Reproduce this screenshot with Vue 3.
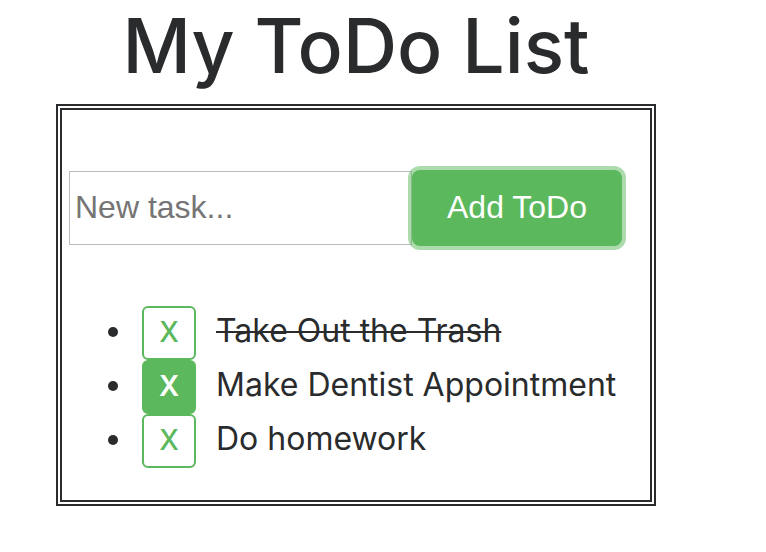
<script setup>
import { ref } from 'vue'

const draft = ref('')
const todos = ref([
  { id: 1, text: 'Take Out the Trash', done: true, active: false },
  { id: 2, text: 'Make Dentist Appointment', done: false, active: true },
  { id: 3, text: 'Do homework', done: false, active: false },
])

function addTodo() {
  const text = draft.value.trim()
  if (!text) return
  todos.value.push({ id: Date.now(), text, done: false, active: false })
  draft.value = ''
}
</script>

<template>
  <main class="page">
    <h1 class="title">My ToDo List</h1>
    <section class="card">
      <form class="add" @submit.prevent="addTodo">
        <input v-model="draft" class="field" type="text" placeholder="New task..." aria-label="New task" />
        <button class="submit" type="submit">Add ToDo</button>
      </form>
      <ul class="list">
        <li v-for="todo in todos" :key="todo.id" class="item">
          <button
            class="toggle"
            :class="{ active: todo.active }"
            type="button"
            :aria-label="'X ' + todo.text"
            @click="todo.done = !todo.done"
          >X</button>
          <span class="text" :class="{ done: todo.done }">{{ todo.text }}</span>
        </li>
      </ul>
    </section>
  </main>
</template>

<style>
body {
  background: #fff;
}
</style>

<style scoped>
.page {
  box-sizing: border-box;
  padding: 0 110px 0 56px;
  font-family: Inter, "Liberation Sans", sans-serif;
  color: #292b2c;
}

.title {
  margin: 0;
  font-size: 75px;
  line-height: 92px;
  font-weight: 500;
  text-align: center;
  white-space: nowrap;
}

.card {
  margin-top: 12px;
  padding: 60px 28px 32px 7px;
  border: 6px double #292b2c;
}

.add {
  display: flex;
  align-items: center;
}

.field {
  box-sizing: border-box;
  flex: 1;
  min-width: 0;
  height: 74px;
  margin: 0;
  padding: 0 5px 2px;
  border: 1px solid #bbb;
  border-radius: 0;
  background: #fff;
  font-family: "Liberation Sans", sans-serif;
  font-size: 32px;
  color: #292b2c;
}

.field::placeholder {
  color: #757575;
  opacity: 1;
}

.submit {
  box-sizing: border-box;
  width: 210px;
  height: 76px;
  padding: 0 0 2px;
  border: 0;
  border-radius: 8px;
  background: #5cb85c;
  box-shadow: 0 0 0 4px rgba(92, 184, 92, 0.5);
  color: #fff;
  font-family: "Liberation Sans", sans-serif;
  font-size: 32px;
}

.list {
  margin: 60px 0 0;
  padding: 0 0 0 66px;
}

.item {
  padding-left: 7px;
  font-size: 32px;
  line-height: 50px;
  white-space: nowrap;
}

.toggle {
  box-sizing: border-box;
  width: 54px;
  height: 54px;
  margin-right: 20px;
  padding: 0 0 2px;
  border: 2px solid #5cb85c;
  border-radius: 6px;
  background: #fff;
  color: #5cb85c;
  font-family: inherit;
  font-size: 28px;
  font-weight: 500;
  vertical-align: top;
}

.toggle.active {
  background: #5cb85c;
  color: #fff;
  font-weight: 600;
}

.done {
  text-decoration: line-through 2px;
}
</style>
